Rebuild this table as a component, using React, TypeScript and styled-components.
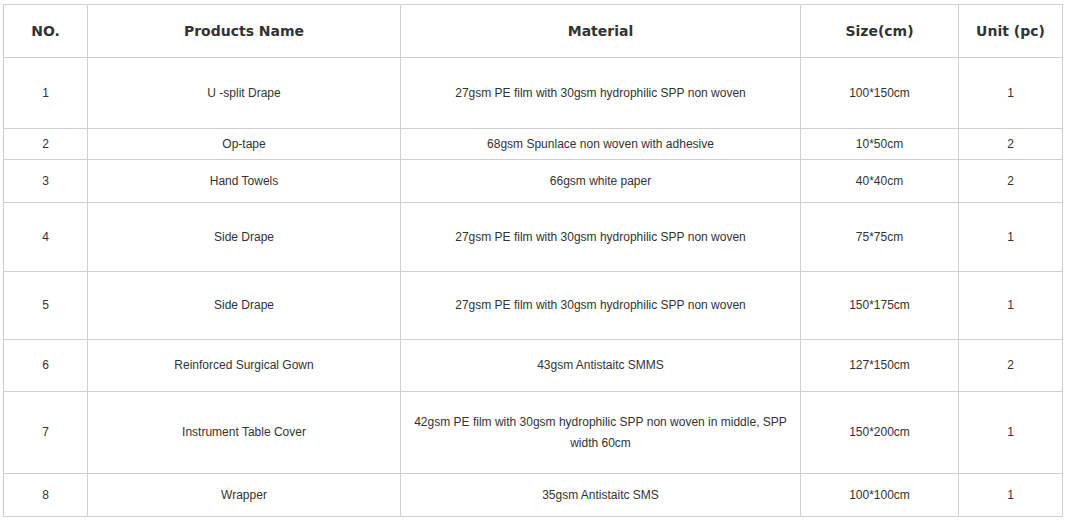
import React from "react";
import styled, { createGlobalStyle } from "styled-components";

const Global = createGlobalStyle`
  html, body { margin: 0; padding: 0; background: #fff; }
  body { font-family: "Liberation Sans", Arial, sans-serif; }
`;

const Wrap = styled.div`
  padding: 4px 0 0 3px;
`;

const Table = styled.table`
  border-collapse: collapse;
  table-layout: fixed;
  width: 1059px;
  color: #333;
`;

const HeadCell = styled.th`
  border: 1px solid #cfcfcf;
  font-family: "DejaVu Sans", Verdana, sans-serif;
  font-weight: bold;
  font-size: 14px;
  color: #333;
  text-align: center;
  vertical-align: middle;
  padding: 0;
`;

const Cell = styled.td`
  border: 1px solid #cfcfcf;
  font-family: "Liberation Sans", Arial, sans-serif;
  font-size: 12px;
  line-height: 21px;
  color: #333;
  text-align: center;
  vertical-align: middle;
  padding: 0 8px;
`;

const Row = styled.tr<{ $h: number }>`
  height: ${(p) => p.$h}px;
`;

const cols = [84, 313, 400, 158, 104];

const rows: { no: string; name: string; mat: string; size: string; unit: string; h: number }[] = [
  { no: "1", name: "U -split Drape", mat: "27gsm PE film with 30gsm hydrophilic SPP non woven", size: "100*150cm", unit: "1", h: 71 },
  { no: "2", name: "Op-tape", mat: "68gsm Spunlace non woven with adhesive", size: "10*50cm", unit: "2", h: 31 },
  { no: "3", name: "Hand Towels", mat: "66gsm white paper", size: "40*40cm", unit: "2", h: 43 },
  { no: "4", name: "Side Drape", mat: "27gsm PE film with 30gsm hydrophilic SPP non woven", size: "75*75cm", unit: "1", h: 69 },
  { no: "5", name: "Side Drape", mat: "27gsm PE film with 30gsm hydrophilic SPP non woven", size: "150*175cm", unit: "1", h: 68 },
  { no: "6", name: "Reinforced Surgical Gown", mat: "43gsm Antistaitc SMMS", size: "127*150cm", unit: "2", h: 52 },
  { no: "7", name: "Instrument Table Cover", mat: "42gsm PE film with 30gsm hydrophilic SPP non woven in middle, SPP width 60cm", size: "150*200cm", unit: "1", h: 82 },
  { no: "8", name: "Wrapper", mat: "35gsm Antistaitc SMS", size: "100*100cm", unit: "1", h: 43 },
];

export default function App() {
  return (
    <>
      <Global />
      <Wrap>
        <Table>
          <colgroup>
            {cols.map((w, i) => (
              <col key={i} style={{ width: w }} />
            ))}
          </colgroup>
          <thead>
            <Row $h={53}>
              <HeadCell>NO.</HeadCell>
              <HeadCell>Products Name</HeadCell>
              <HeadCell>Material</HeadCell>
              <HeadCell>Size(cm)</HeadCell>
              <HeadCell>Unit (pc)</HeadCell>
            </Row>
          </thead>
          <tbody>
            {rows.map((r, i) => (
              <Row key={i} $h={r.h}>
                <Cell>{r.no}</Cell>
                <Cell>{r.name}</Cell>
                <Cell>{r.mat}</Cell>
                <Cell>{r.size}</Cell>
                <Cell>{r.unit}</Cell>
              </Row>
            ))}
          </tbody>
        </Table>
      </Wrap>
    </>
  );
}
